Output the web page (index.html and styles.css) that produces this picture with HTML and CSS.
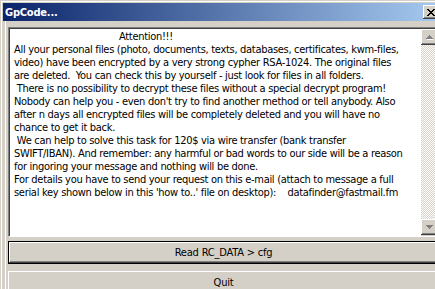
FILE: index.html
```html
<!DOCTYPE html>
<html>
<head>
<meta charset="utf-8">
<title>GpCode...</title>
<link rel="stylesheet" href="styles.css">
</head>
<body>
<div class="window">
  <div class="titlebar">
    <span class="title">GpCode...</span>
    <div class="close">
      <svg width="8" height="7" viewBox="0 0 8 7"><path d="M0 0h2v1h1v1h2v-1h1v-1h2v1h-1v1h-1v1h-1v1h1v1h1v1h1v1h-2v-1h-1v-1h-2v1h-1v1h-2v-1h1v-1h1v-1h1v-1h-1v-1h-1v-1h-1z" fill="#000"/></svg>
    </div>
  </div>
  <div class="client">
    <div class="memo">
      <div class="memo-text"><div class="center">Attention!!!</div><div>All your personal files (photo, documents, texts, databases, certificates, kwm-files,</div><div>video) have been encrypted by a very strong cypher RSA-1024. The original files</div><div>are deleted.&nbsp; You can check this by yourself - just look for files in all folders.</div><div>&nbsp;There is no possibility to decrypt these files without a special decrypt program!</div><div>Nobody can help you - even don't try to find another method or tell anybody. Also</div><div>after n days all encrypted files will be completely deleted and you will have no</div><div>chance to get it back.</div><div>&nbsp;We can help to solve this task for 120$ via wire transfer (bank transfer</div><div>SWIFT/IBAN). And remember: any harmful or bad words to our side will be a reason</div><div>for ingoring your message and nothing will be done.</div><div>For details you have to send your request on this e-mail (attach to message a full</div><div>serial key shown below in this 'how to..' file on desktop):&nbsp;&nbsp;&nbsp; datafinder@fastmail.fm</div></div>
      <div class="scrollbar">
        <div class="sb-btn">
          <svg width="7" height="5" viewBox="0 0 7 5"><path d="M4 2h1v1h1v1h1v1h-6v-1h1v-1h1v-1h1z" fill="#fff"/><path d="M3 0h1v1h1v1h1v1h1v1h-7v-1h1v-1h1v-1h1z" fill="#808080"/></svg>
        </div>
        <div class="sb-track"></div>
        <div class="sb-btn">
          <svg width="7" height="4" viewBox="0 0 7 4"><path d="M0 0h7v1h-1v1h-1v1h-1v1h-1v-1h-1v-1h-1v-1h-1z" fill="#808080"/></svg>
        </div>
      </div>
    </div>
    <div class="btn btn-default"><span class="btn-face">Read RC_DATA &gt; cfg</span></div>
    <div class="btn"><span class="btn-face">Quit</span></div>
  </div>
</div>
</body>
</html>
```

FILE: styles.css
```css
html, body {
  margin: 0;
  padding: 0;
  background: #d4d0c8;
  overflow: hidden;
}

body {
  width: 435px;
  height: 289px;
  font-family: "DejaVu Sans Condensed", "DejaVu Sans", sans-serif;
  font-stretch: condensed;
  font-size: 11px;
  color: #000;
}

.window {
  width: 441px;
  height: 289px;
  box-sizing: border-box;
  padding: 1px;
  border-top: 1px solid #d4d0c8;
  border-left: 1px solid #d4d0c8;
  box-shadow: inset 1px 1px 0 #fff;
  background: #d4d0c8;
  overflow: hidden;
}

.titlebar {
  position: relative;
  height: 18px;
  margin: 1px 0 0 1px;
  background: linear-gradient(to right, #0a246a, #a6caf0);
  display: flex;
  align-items: center;
}

.title {
  color: #fff;
  font-weight: bold;
  padding-left: 2px;
  letter-spacing: -0.2px;
}

.close {
  position: absolute;
  left: 420px;
  top: 2px;
  width: 16px;
  height: 14px;
  box-sizing: border-box;
  background: #d4d0c8;
  box-shadow: inset -1px -1px 0 #404040, inset 1px 1px 0 #fff, inset -2px -2px 0 #808080;
  display: flex;
  align-items: center;
  justify-content: center;
}

.close svg {
  margin-left: -1px;
}

.client {
  padding: 6px 0 0 2px;
  margin-left: 3px;
  border-left: 1px solid #fff;
  height: 268px;
  box-sizing: border-box;
  display: flex;
  flex-direction: column;
  align-items: flex-start;
}

.memo {
  width: 431px;
  height: 210px;
  flex-shrink: 0;
  box-sizing: border-box;
  border-top: 1px solid #808080;
  border-left: 1px solid #808080;
  border-right: 1px solid #fff;
  border-bottom: 1px solid #fff;
  display: flex;
}

.memo-text {
  flex: 1;
  background: #fff;
  border-top: 1px solid #404040;
  border-left: 1px solid #404040;
  padding: 1px 0 0 4px;
  line-height: 13px;
  letter-spacing: -0.3px;
  white-space: pre;
  overflow: hidden;
}

.center {
  padding-left: 105px;
}

.scrollbar {
  width: 16px;
  display: flex;
  flex-direction: column;
  border-top: 1px solid #404040;
  border-right: 1px solid #d4d0c8;
  border-bottom: 1px solid #d4d0c8;
}

.sb-btn {
  height: 16px;
  box-sizing: border-box;
  background: #d4d0c8;
  box-shadow: inset -1px -1px 0 #404040, inset 1px 1px 0 #fff, inset -2px -2px 0 #808080;
  display: flex;
  align-items: center;
  justify-content: center;
}

.sb-track {
  flex: 1;
  background: repeating-conic-gradient(#d4d0c8 0 25%, #fff 0 50%) 0 0 / 2px 2px;
}

.btn {
  width: 431px;
  height: 23px;
  flex-shrink: 0;
  box-sizing: border-box;
  margin-top: 7px;
  background: #d4d0c8;
  box-shadow: inset -1px -1px 0 #404040, inset 1px 1px 0 #fff, inset -2px -2px 0 #808080;
  display: flex;
  align-items: center;
  justify-content: center;
}

.btn-default {
  margin-top: 4px;
  border: 1px solid #000;
}

.btn-face {
  line-height: 13px;
  letter-spacing: -0.2px;
}
```
